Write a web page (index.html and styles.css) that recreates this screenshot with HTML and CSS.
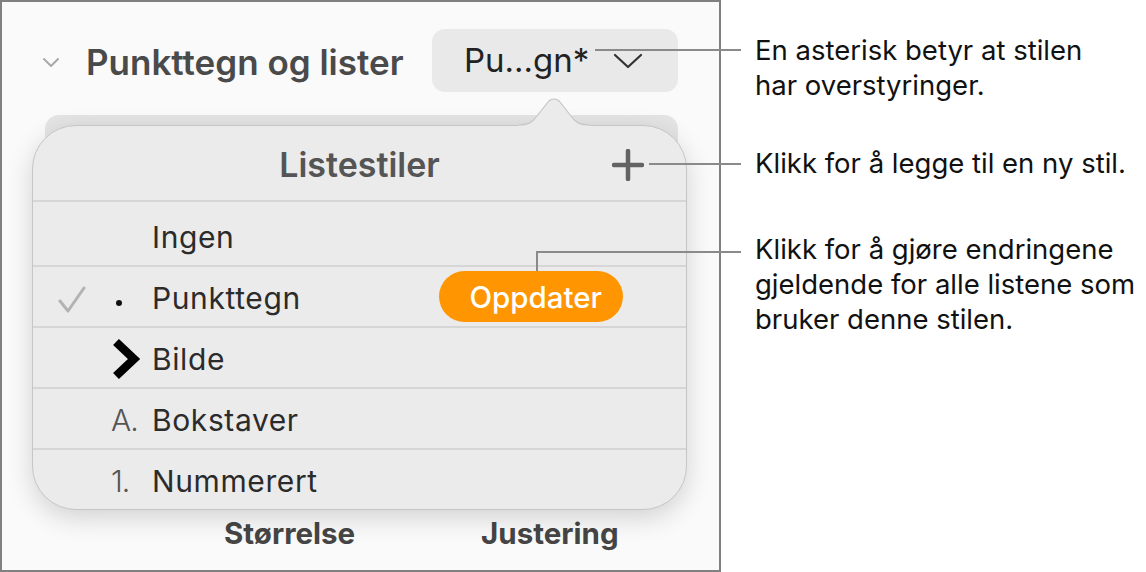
FILE: index.html
```html
<!DOCTYPE html>
<html lang="nb">
<head>
    <meta charset="UTF-8">
    <meta name="viewport" content="width=device-width, initial-scale=1.0">
    <title>Punkttegn og lister</title>
    <link rel="stylesheet" href="styles.css">
</head>
<body>
    <div class="page">
        <div class="panel">
            <div class="section-head">
                <svg class="disclosure" width="18" height="11" viewBox="0 0 18 11">
                    <polyline points="2,2 9,9 16,2" fill="none" stroke="#a9a9a9" stroke-width="2" stroke-linecap="round" stroke-linejoin="round"/>
                </svg>
                <span class="section-title">Punkttegn og lister</span>
                <div class="style-pick">
                    <span>Pu...gn*</span>
                    <svg width="30" height="18" viewBox="0 0 30 18">
                        <polyline points="2,3 15,15 28,3" fill="none" stroke="#333" stroke-width="2.2" stroke-linecap="round" stroke-linejoin="round"/>
                    </svg>
                </div>
            </div>

            <div class="pop-area">
                <div class="popover">
                    <svg class="pop-arrow" width="72" height="32" viewBox="0 0 72 32">
                        <path d="M0 29 C10 29 14 27 19 20 L30 6 C33 2 39 2 42 6 L53 20 C58 27 62 29 72 29 L72 32 L0 32 Z" fill="#ebebeb"/>
                        <path d="M0 29 C10 29 14 27 19 20 L30 6 C33 2 39 2 42 6 L53 20 C58 27 62 29 72 29" fill="none" stroke="#c6c6c6" stroke-width="1.2"/>
                    </svg>
                    <div class="pop-head">
                        <span class="pop-title">Listestiler</span>
                        <svg class="add" width="32" height="32" viewBox="0 0 32 32">
                            <path d="M16 2 V30 M2 16 H30" stroke="#626262" stroke-width="4.5" stroke-linecap="round"/>
                        </svg>
                    </div>
                    <ul class="style-list">
                        <li class="first">
                            <span class="mark"></span>
                            <span class="bullet"></span>
                            <span class="name">Ingen</span>
                        </li>
                        <li>
                            <span class="mark">
                                <svg width="28" height="27" viewBox="0 0 28 27">
                                    <polyline points="2,15 10,25 26,2" fill="none" stroke="#b3b3b3" stroke-width="3" stroke-linecap="round" stroke-linejoin="round"/>
                                </svg>
                            </span>
                            <span class="bullet"><i class="dot"></i></span>
                            <span class="name">Punkttegn</span>
                            <span class="update">Oppdater</span>
                        </li>
                        <li>
                            <span class="mark"></span>
                            <span class="bullet">
                                <svg width="30" height="44" viewBox="0 0 30 44">
                                    <polyline points="5,5 23,22 5,39" fill="none" stroke="#000" stroke-width="8.5" stroke-linejoin="miter"/>
                                </svg>
                            </span>
                            <span class="name">Bilde</span>
                        </li>
                        <li>
                            <span class="mark"></span>
                            <span class="bullet label">A.</span>
                            <span class="name">Bokstaver</span>
                        </li>
                        <li>
                            <span class="mark"></span>
                            <span class="bullet label">1.</span>
                            <span class="name">Nummerert</span>
                        </li>
                    </ul>
                </div>
            </div>

            <div class="tabs">
                <span>Størrelse</span>
                <span>Justering</span>
            </div>
        </div>

        <div class="notes">
            <p class="note note-asterisk">En asterisk betyr at stilen<br>har overstyringer.</p>
            <p class="note note-add">Klikk for å legge til en ny stil.</p>
            <p class="note note-update">Klikk for å gjøre endringene<br>gjeldende for alle listene som<br>bruker denne stilen.</p>
        </div>

        <!-- leader lines from the notes to the controls -->
        <div class="leader leader-asterisk"></div>
        <div class="leader leader-add"></div>
        <div class="leader leader-update"></div>
        <div class="leader leader-update-drop"></div>
    </div>
</body>
</html>
```

FILE: styles.css
```css
body {
    margin: 0;
    background: #fff;
    font-family: Inter, "Noto Sans", sans-serif;
    color: #111;
}
.page {
    position: relative;
    display: flex;
    width: 1146px;
    height: 572px;
    overflow: hidden;
}
.panel {
    width: 721px;
    height: 572px;
    box-sizing: border-box;
    flex-shrink: 0;
    border: 2px solid #808080;
    background: #fafafa;
    padding-top: 26px;
}
.section-head {
    display: flex;
    align-items: center;
    height: 64px;
}
.disclosure {
    margin-left: 40px;
    margin-top: 4px;
}
.section-title {
    margin-left: 26px;
    margin-top: 3px;
    font-size: 35px;
    font-weight: 600;
    color: #4a4a4a;
}
.style-pick {
    margin-left: auto;
    margin-right: 41px;
    width: 246px;
    height: 63px;
    box-sizing: border-box;
    padding-left: 32px;
    display: flex;
    align-items: center;
    gap: 24px;
    background: #e9e9e9;
    border-radius: 13px;
    font-size: 33px;
    color: #222;
}
.style-pick svg {
    margin-top: 2px;
}
.pop-area {
    position: relative;
    margin-top: 33px;
}
/* the sheet peeking out behind the popover */
.pop-area::before {
    content: "";
    position: absolute;
    top: -10px;
    left: 43px;
    width: 633px;
    height: 385px;
    background: #e4e4e4;
    border-radius: 14px;
}
.popover {
    position: relative;
    margin-left: 30px;
    width: 655px;
    height: 385px;
    box-sizing: border-box;
    background: #ebebeb;
    border: 1.2px solid #c6c6c6;
    border-radius: 44px;
    box-shadow: 0 8px 26px rgba(0, 0, 0, 0.16);
}
.pop-arrow {
    position: absolute;
    top: -30px;
    left: 485px;
}
.pop-head {
    position: relative;
    height: 74px;
    display: flex;
    align-items: center;
    justify-content: center;
}
.pop-title {
    font-size: 34px;
    font-weight: 600;
    color: #555;
    margin-top: 3px;
}
.add {
    position: absolute;
    right: 42px;
    top: 23px;
}
.style-list {
    list-style: none;
    margin: 0;
    padding: 0;
}
.style-list li {
    display: flex;
    align-items: center;
    height: 61px;
    box-sizing: border-box;
    padding-top: 3px;
    border-top: 2px solid #d6d6d6;
    font-size: 30px;
    letter-spacing: 0.6px;
    color: #2b2b2b;
}
.style-list li.first {
    height: 65px;
    padding-top: 6px;
}
.mark {
    width: 78px;
    display: flex;
    justify-content: center;
    margin-top: 2px;
}
.bullet {
    width: 41px;
    display: flex;
    align-items: center;
}
.dot {
    width: 6px;
    height: 6px;
    margin-left: 5px;
    margin-top: 10px;
    border-radius: 50%;
    background: #111;
}
.bullet.label {
    font-size: 30px;
    color: #555;
    font-weight: 300;
    letter-spacing: -1px;
}
.update {
    margin-left: auto;
    margin-right: 63px;
    height: 51px;
    margin-top: -3px;
    padding: 0 21px 0 30px;
    display: flex;
    align-items: center;
    background: #ff9500;
    color: #fff;
    border-radius: 26px;
    font-size: 29.5px;
    font-weight: 500;
    letter-spacing: 0;
}
.tabs {
    display: flex;
    margin-top: 5px;
    padding-left: 222px;
    gap: 126px;
    font-size: 29.5px;
    font-weight: 700;
    color: #454545;
}
.notes {
    padding-left: 34px;
}
.note {
    margin: 0;
    font-size: 27.5px;
    line-height: 35px;
    color: #111;
}
.note-asterisk {
    margin-top: 33px;
}
.note-add {
    margin-top: 43px;
}
.note-update {
    margin-top: 51px;
}
.leader {
    position: absolute;
    background: #8a8a8a;
}
.leader-asterisk {
    left: 595px;
    top: 49px;
    width: 146px;
    height: 2px;
}
.leader-add {
    left: 649px;
    top: 163px;
    width: 92px;
    height: 2px;
}
.leader-update {
    left: 536px;
    top: 251px;
    width: 205px;
    height: 2px;
}
.leader-update-drop {
    left: 536px;
    top: 251px;
    width: 2px;
    height: 20px;
}
```
